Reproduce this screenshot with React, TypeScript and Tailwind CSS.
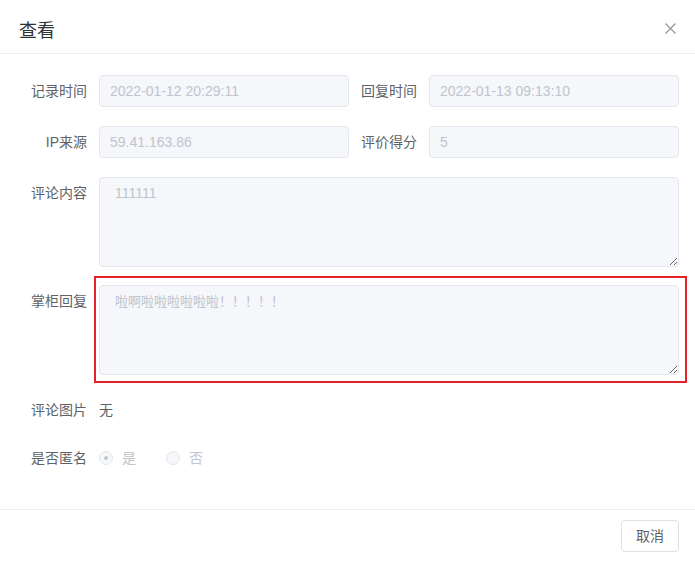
import React from "react";

const font = {
  fontFamily: '"Liberation Sans", "Noto Sans CJK SC", sans-serif',
};

function Label({ children }: { children: React.ReactNode }) {
  return (
    <div className="w-[80px] shrink-0 pr-[12px] text-right text-[14px] leading-[32px] text-[#606266]">
      {children}
    </div>
  );
}

function Field({ label, value }: { label: string; value: string }) {
  return (
    <div className="flex">
      <Label>{label}</Label>
      <input
        readOnly
        value={value}
        className="h-[32px] w-[250px] rounded-[4px] border border-[#e4e7ed] bg-[#f5f7fa] px-[10px] text-[14px] text-[#c0c4cc] outline-none"
      />
    </div>
  );
}

function Radio({ label, checked }: { label: string; checked?: boolean }) {
  return (
    <span className="mr-[30px] inline-flex items-center">
      <span className="flex h-[14px] w-[14px] items-center justify-center rounded-full border border-[#e4e7ed] bg-[#f5f7fa]">
        {checked && <span className="h-[4px] w-[4px] rounded-full bg-[#c0c4cc]" />}
      </span>
      <span className="pl-[9px] text-[14px] text-[#c0c4cc]">{label}</span>
    </span>
  );
}

export default function App(): React.ReactNode {
  return (
    <div className="min-h-[571px] w-full bg-white" style={font}>
      {/* Header */}
      <div className="flex items-start justify-between border-b border-[#ebeef5] pb-[10px] pl-[19px] pr-[19px] pt-[19px]">
        <span className="text-[18px] leading-[24px] text-[#303133]">查看</span>
        <button className="mt-[4px] text-[#909399]" aria-label="close">
          <svg width="11" height="11" viewBox="0 0 11 11" fill="none">
            <path d="M0.5 0.5L10.5 10.5M10.5 0.5L0.5 10.5" stroke="currentColor" strokeWidth="1.1" />
          </svg>
        </button>
      </div>

      {/* Body */}
      <div className="pb-[35px] pl-[19px] pr-[16px] pt-[21px]">
        <div className="mb-[19px] grid grid-cols-2">
          <Field label="记录时间" value="2022-01-12 20:29:11" />
          <Field label="回复时间" value="2022-01-13 09:13:10" />
        </div>
        <div className="mb-[19px] grid grid-cols-2">
          <Field label="IP来源" value="59.41.163.86" />
          <Field label="评价得分" value="5" />
        </div>

        <div className="mb-[18px] flex">
          <Label>评论内容</Label>
          <textarea
            readOnly
            value="111111"
            className="block h-[90px] flex-1 resize-y rounded-[4px] border border-[#e4e7ed] bg-[#f5f7fa] px-[15px] py-[5px] text-[14px] leading-[21px] text-[#c0c4cc] outline-none"
          />
        </div>

        <div className="mb-[19px] flex">
          <Label>掌柜回复</Label>
          <div className="relative flex flex-1">
            <textarea
              readOnly
              value="啦啊啦啦啦啦啦啦！！！！！"
              className="block h-[90px] flex-1 resize-y rounded-[4px] border border-[#e4e7ed] bg-[#f5f7fa] px-[15px] py-[5px] text-[13px] leading-[21px] text-[#c0c4cc] outline-none"
            />
            <div className="pointer-events-none absolute -bottom-[8px] -left-[5px] -right-[8px] -top-[9px] border-2 border-[#e62129]" />
          </div>
        </div>

        <div className="mb-[16px] flex">
          <Label>评论图片</Label>
          <span className="text-[14px] leading-[32px] text-[#606266]">无</span>
        </div>

        <div className="flex">
          <Label>是否匿名</Label>
          <div className="flex h-[32px] items-center">
            <Radio label="是" checked />
            <Radio label="否" />
          </div>
        </div>
      </div>

      {/* Footer */}
      <div className="flex justify-end border-t border-[#ebeef5] pb-[19px] pr-[16px] pt-[10px]">
        <button className="h-[32px] rounded-[4px] border border-[#dcdfe6] bg-white px-[14px] text-[14px] text-[#606266]">
          取消
        </button>
      </div>
    </div>
  );
}
